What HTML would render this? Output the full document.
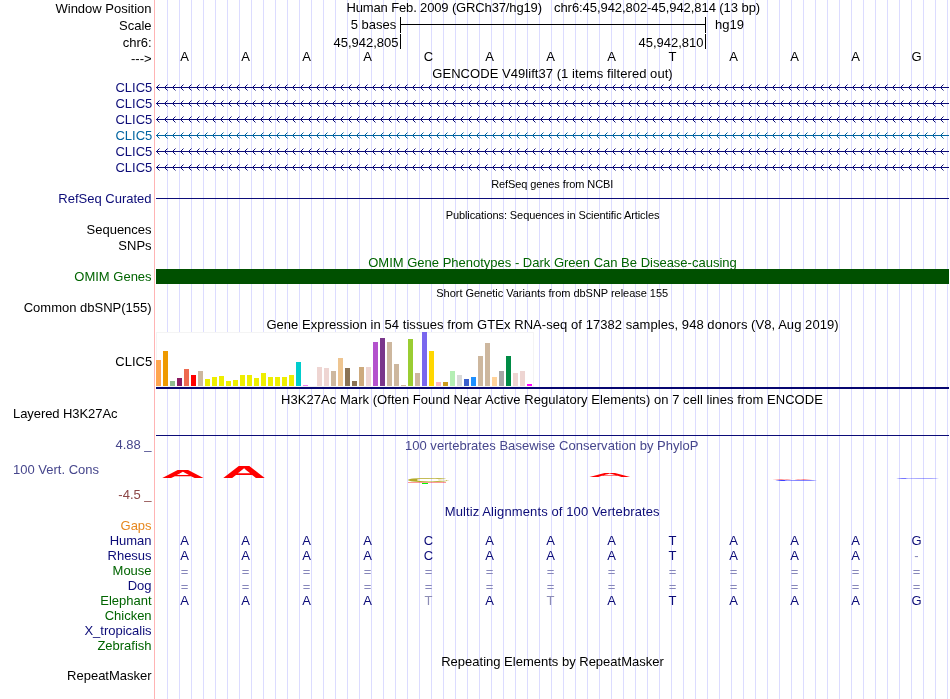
<!DOCTYPE html>
<html><head><meta charset="utf-8"><title>UCSC Genome Browser</title>
<style>
html,body{margin:0;padding:0;background:#fff;}
body{width:950px;height:699px;overflow:hidden;position:relative;font-family:"Liberation Sans",Arial,Helvetica,sans-serif;font-size:13px;color:#000;}
#v{position:absolute;left:0;top:0;width:950px;height:699px;overflow:hidden;will-change:transform;}
.g{position:absolute;top:0;width:1px;height:699px;background:#dcdcff;}
.t{position:absolute;white-space:pre;line-height:16px;height:16px;margin-top:1px;}
.r{text-align:right;left:0;width:151.6px;}
.c{text-align:center;left:155px;width:795px;}
.s{font-size:11px;margin-top:0;}
.b{position:absolute;}
.ln{position:absolute;left:156px;width:793px;height:1px;background:#0c0c78;}
.ch{position:absolute;left:156px;width:793px;height:7px;}
.bs{position:absolute;width:20px;text-align:center;line-height:16px;height:16px;margin-top:1px;}
svg{position:absolute;left:0;top:0;}
</style></head><body><div id="v">
<div class="g" style="left:167px"></div>
<div class="g" style="left:179px"></div>
<div class="g" style="left:191px"></div>
<div class="g" style="left:203px"></div>
<div class="g" style="left:215px"></div>
<div class="g" style="left:227px"></div>
<div class="g" style="left:239px"></div>
<div class="g" style="left:251px"></div>
<div class="g" style="left:263px"></div>
<div class="g" style="left:275px"></div>
<div class="g" style="left:287px"></div>
<div class="g" style="left:299px"></div>
<div class="g" style="left:311px"></div>
<div class="g" style="left:323px"></div>
<div class="g" style="left:335px"></div>
<div class="g" style="left:347px"></div>
<div class="g" style="left:359px"></div>
<div class="g" style="left:371px"></div>
<div class="g" style="left:383px"></div>
<div class="g" style="left:395px"></div>
<div class="g" style="left:407px"></div>
<div class="g" style="left:419px"></div>
<div class="g" style="left:431px"></div>
<div class="g" style="left:443px"></div>
<div class="g" style="left:455px"></div>
<div class="g" style="left:467px"></div>
<div class="g" style="left:479px"></div>
<div class="g" style="left:491px"></div>
<div class="g" style="left:503px"></div>
<div class="g" style="left:515px"></div>
<div class="g" style="left:527px"></div>
<div class="g" style="left:539px"></div>
<div class="g" style="left:551px"></div>
<div class="g" style="left:563px"></div>
<div class="g" style="left:575px"></div>
<div class="g" style="left:587px"></div>
<div class="g" style="left:599px"></div>
<div class="g" style="left:611px"></div>
<div class="g" style="left:623px"></div>
<div class="g" style="left:635px"></div>
<div class="g" style="left:647px"></div>
<div class="g" style="left:659px"></div>
<div class="g" style="left:671px"></div>
<div class="g" style="left:683px"></div>
<div class="g" style="left:695px"></div>
<div class="g" style="left:707px"></div>
<div class="g" style="left:719px"></div>
<div class="g" style="left:731px"></div>
<div class="g" style="left:743px"></div>
<div class="g" style="left:755px"></div>
<div class="g" style="left:767px"></div>
<div class="g" style="left:779px"></div>
<div class="g" style="left:791px"></div>
<div class="g" style="left:803px"></div>
<div class="g" style="left:815px"></div>
<div class="g" style="left:827px"></div>
<div class="g" style="left:839px"></div>
<div class="g" style="left:851px"></div>
<div class="g" style="left:863px"></div>
<div class="g" style="left:875px"></div>
<div class="g" style="left:887px"></div>
<div class="g" style="left:899px"></div>
<div class="g" style="left:911px"></div>
<div class="g" style="left:923px"></div>
<div class="g" style="left:935px"></div>
<div class="g" style="left:947px"></div>
<div class="g" style="left:154px;background:#ffb4b4"></div>
<div class="t r" style="top:0px;color:#000;">Window Position</div>
<div class="t r" style="top:17px;color:#000;">Scale</div>
<div class="t r" style="top:34px;color:#000;">chr6:</div>
<div class="t r" style="top:50px;color:#000;">---&gt;</div>
<div class="t" style="left:346.5px;top:-1px;letter-spacing:-0.14px">Human Feb. 2009 (GRCh37/hg19)</div>
<div class="t" style="left:554px;top:-1px;letter-spacing:-0.06px">chr6:45,942,802-45,942,814 (13 bp)</div>
<div class="t" style="left:300px;width:96.3px;text-align:right;top:16px">5 bases</div>
<div class="b" style="left:400px;top:24px;width:306px;height:1px;background:#000"></div>
<div class="b" style="left:400px;top:17px;width:1px;height:16px;background:#000"></div>
<div class="b" style="left:705px;top:17px;width:1px;height:16px;background:#000"></div>
<div class="t" style="left:715px;top:16px">hg19</div>
<div class="t" style="left:300px;width:98.5px;text-align:right;top:34px">45,942,805</div>
<div class="b" style="left:400px;top:34px;width:1px;height:15px;background:#000"></div>
<div class="t" style="left:600px;width:103.5px;text-align:right;top:34px">45,942,810</div>
<div class="b" style="left:705px;top:34px;width:1px;height:15px;background:#000"></div>
<div class="bs" style="left:174.5px;top:48px">A</div>
<div class="bs" style="left:235.5px;top:48px">A</div>
<div class="bs" style="left:296.5px;top:48px">A</div>
<div class="bs" style="left:357.5px;top:48px">A</div>
<div class="bs" style="left:418.5px;top:48px">C</div>
<div class="bs" style="left:479.5px;top:48px">A</div>
<div class="bs" style="left:540.5px;top:48px">A</div>
<div class="bs" style="left:601.5px;top:48px">A</div>
<div class="bs" style="left:662.5px;top:48px">T</div>
<div class="bs" style="left:723.5px;top:48px">A</div>
<div class="bs" style="left:784.5px;top:48px">A</div>
<div class="bs" style="left:845.5px;top:48px">A</div>
<div class="bs" style="left:906.5px;top:48px">G</div>
<div class="t c" style="top:65px;color:#000;letter-spacing:0.05px">GENCODE V49lift37 (1 items filtered out)</div>
<div class="t r" style="top:79px;color:#0c0c78;width:152.3px">CLIC5</div>
<div class="ln" style="top:87px;background:#0c0c78"></div>
<svg class="ch" style="left:156px;top:84px" width="793" height="7" viewBox="0 0 793 7"><path d="M3.5 0.5L0.5 3.5L3.5 6.5M11.5 0.5L8.5 3.5L11.5 6.5M19.5 0.5L16.5 3.5L19.5 6.5M27.5 0.5L24.5 3.5L27.5 6.5M35.5 0.5L32.5 3.5L35.5 6.5M43.5 0.5L40.5 3.5L43.5 6.5M51.5 0.5L48.5 3.5L51.5 6.5M59.5 0.5L56.5 3.5L59.5 6.5M67.5 0.5L64.5 3.5L67.5 6.5M75.5 0.5L72.5 3.5L75.5 6.5M83.5 0.5L80.5 3.5L83.5 6.5M91.5 0.5L88.5 3.5L91.5 6.5M99.5 0.5L96.5 3.5L99.5 6.5M107.5 0.5L104.5 3.5L107.5 6.5M115.5 0.5L112.5 3.5L115.5 6.5M123.5 0.5L120.5 3.5L123.5 6.5M131.5 0.5L128.5 3.5L131.5 6.5M139.5 0.5L136.5 3.5L139.5 6.5M147.5 0.5L144.5 3.5L147.5 6.5M155.5 0.5L152.5 3.5L155.5 6.5M163.5 0.5L160.5 3.5L163.5 6.5M171.5 0.5L168.5 3.5L171.5 6.5M179.5 0.5L176.5 3.5L179.5 6.5M187.5 0.5L184.5 3.5L187.5 6.5M195.5 0.5L192.5 3.5L195.5 6.5M203.5 0.5L200.5 3.5L203.5 6.5M211.5 0.5L208.5 3.5L211.5 6.5M219.5 0.5L216.5 3.5L219.5 6.5M227.5 0.5L224.5 3.5L227.5 6.5M235.5 0.5L232.5 3.5L235.5 6.5M243.5 0.5L240.5 3.5L243.5 6.5M251.5 0.5L248.5 3.5L251.5 6.5M259.5 0.5L256.5 3.5L259.5 6.5M267.5 0.5L264.5 3.5L267.5 6.5M275.5 0.5L272.5 3.5L275.5 6.5M283.5 0.5L280.5 3.5L283.5 6.5M291.5 0.5L288.5 3.5L291.5 6.5M299.5 0.5L296.5 3.5L299.5 6.5M307.5 0.5L304.5 3.5L307.5 6.5M315.5 0.5L312.5 3.5L315.5 6.5M323.5 0.5L320.5 3.5L323.5 6.5M331.5 0.5L328.5 3.5L331.5 6.5M339.5 0.5L336.5 3.5L339.5 6.5M347.5 0.5L344.5 3.5L347.5 6.5M355.5 0.5L352.5 3.5L355.5 6.5M363.5 0.5L360.5 3.5L363.5 6.5M371.5 0.5L368.5 3.5L371.5 6.5M379.5 0.5L376.5 3.5L379.5 6.5M387.5 0.5L384.5 3.5L387.5 6.5M395.5 0.5L392.5 3.5L395.5 6.5M403.5 0.5L400.5 3.5L403.5 6.5M411.5 0.5L408.5 3.5L411.5 6.5M419.5 0.5L416.5 3.5L419.5 6.5M427.5 0.5L424.5 3.5L427.5 6.5M435.5 0.5L432.5 3.5L435.5 6.5M443.5 0.5L440.5 3.5L443.5 6.5M451.5 0.5L448.5 3.5L451.5 6.5M459.5 0.5L456.5 3.5L459.5 6.5M467.5 0.5L464.5 3.5L467.5 6.5M475.5 0.5L472.5 3.5L475.5 6.5M483.5 0.5L480.5 3.5L483.5 6.5M491.5 0.5L488.5 3.5L491.5 6.5M499.5 0.5L496.5 3.5L499.5 6.5M507.5 0.5L504.5 3.5L507.5 6.5M515.5 0.5L512.5 3.5L515.5 6.5M523.5 0.5L520.5 3.5L523.5 6.5M531.5 0.5L528.5 3.5L531.5 6.5M539.5 0.5L536.5 3.5L539.5 6.5M547.5 0.5L544.5 3.5L547.5 6.5M555.5 0.5L552.5 3.5L555.5 6.5M563.5 0.5L560.5 3.5L563.5 6.5M571.5 0.5L568.5 3.5L571.5 6.5M579.5 0.5L576.5 3.5L579.5 6.5M587.5 0.5L584.5 3.5L587.5 6.5M595.5 0.5L592.5 3.5L595.5 6.5M603.5 0.5L600.5 3.5L603.5 6.5M611.5 0.5L608.5 3.5L611.5 6.5M619.5 0.5L616.5 3.5L619.5 6.5M627.5 0.5L624.5 3.5L627.5 6.5M635.5 0.5L632.5 3.5L635.5 6.5M643.5 0.5L640.5 3.5L643.5 6.5M651.5 0.5L648.5 3.5L651.5 6.5M659.5 0.5L656.5 3.5L659.5 6.5M667.5 0.5L664.5 3.5L667.5 6.5M675.5 0.5L672.5 3.5L675.5 6.5M683.5 0.5L680.5 3.5L683.5 6.5M691.5 0.5L688.5 3.5L691.5 6.5M699.5 0.5L696.5 3.5L699.5 6.5M707.5 0.5L704.5 3.5L707.5 6.5M715.5 0.5L712.5 3.5L715.5 6.5M723.5 0.5L720.5 3.5L723.5 6.5M731.5 0.5L728.5 3.5L731.5 6.5M739.5 0.5L736.5 3.5L739.5 6.5M747.5 0.5L744.5 3.5L747.5 6.5M755.5 0.5L752.5 3.5L755.5 6.5M763.5 0.5L760.5 3.5L763.5 6.5M771.5 0.5L768.5 3.5L771.5 6.5M779.5 0.5L776.5 3.5L779.5 6.5M787.5 0.5L784.5 3.5L787.5 6.5" fill="none" stroke="#0c0c78" stroke-width="1"/></svg>
<div class="t r" style="top:95px;color:#0c0c78;width:152.3px">CLIC5</div>
<div class="ln" style="top:103px;background:#0c0c78"></div>
<svg class="ch" style="left:156px;top:100px" width="793" height="7" viewBox="0 0 793 7"><path d="M3.5 0.5L0.5 3.5L3.5 6.5M11.5 0.5L8.5 3.5L11.5 6.5M19.5 0.5L16.5 3.5L19.5 6.5M27.5 0.5L24.5 3.5L27.5 6.5M35.5 0.5L32.5 3.5L35.5 6.5M43.5 0.5L40.5 3.5L43.5 6.5M51.5 0.5L48.5 3.5L51.5 6.5M59.5 0.5L56.5 3.5L59.5 6.5M67.5 0.5L64.5 3.5L67.5 6.5M75.5 0.5L72.5 3.5L75.5 6.5M83.5 0.5L80.5 3.5L83.5 6.5M91.5 0.5L88.5 3.5L91.5 6.5M99.5 0.5L96.5 3.5L99.5 6.5M107.5 0.5L104.5 3.5L107.5 6.5M115.5 0.5L112.5 3.5L115.5 6.5M123.5 0.5L120.5 3.5L123.5 6.5M131.5 0.5L128.5 3.5L131.5 6.5M139.5 0.5L136.5 3.5L139.5 6.5M147.5 0.5L144.5 3.5L147.5 6.5M155.5 0.5L152.5 3.5L155.5 6.5M163.5 0.5L160.5 3.5L163.5 6.5M171.5 0.5L168.5 3.5L171.5 6.5M179.5 0.5L176.5 3.5L179.5 6.5M187.5 0.5L184.5 3.5L187.5 6.5M195.5 0.5L192.5 3.5L195.5 6.5M203.5 0.5L200.5 3.5L203.5 6.5M211.5 0.5L208.5 3.5L211.5 6.5M219.5 0.5L216.5 3.5L219.5 6.5M227.5 0.5L224.5 3.5L227.5 6.5M235.5 0.5L232.5 3.5L235.5 6.5M243.5 0.5L240.5 3.5L243.5 6.5M251.5 0.5L248.5 3.5L251.5 6.5M259.5 0.5L256.5 3.5L259.5 6.5M267.5 0.5L264.5 3.5L267.5 6.5M275.5 0.5L272.5 3.5L275.5 6.5M283.5 0.5L280.5 3.5L283.5 6.5M291.5 0.5L288.5 3.5L291.5 6.5M299.5 0.5L296.5 3.5L299.5 6.5M307.5 0.5L304.5 3.5L307.5 6.5M315.5 0.5L312.5 3.5L315.5 6.5M323.5 0.5L320.5 3.5L323.5 6.5M331.5 0.5L328.5 3.5L331.5 6.5M339.5 0.5L336.5 3.5L339.5 6.5M347.5 0.5L344.5 3.5L347.5 6.5M355.5 0.5L352.5 3.5L355.5 6.5M363.5 0.5L360.5 3.5L363.5 6.5M371.5 0.5L368.5 3.5L371.5 6.5M379.5 0.5L376.5 3.5L379.5 6.5M387.5 0.5L384.5 3.5L387.5 6.5M395.5 0.5L392.5 3.5L395.5 6.5M403.5 0.5L400.5 3.5L403.5 6.5M411.5 0.5L408.5 3.5L411.5 6.5M419.5 0.5L416.5 3.5L419.5 6.5M427.5 0.5L424.5 3.5L427.5 6.5M435.5 0.5L432.5 3.5L435.5 6.5M443.5 0.5L440.5 3.5L443.5 6.5M451.5 0.5L448.5 3.5L451.5 6.5M459.5 0.5L456.5 3.5L459.5 6.5M467.5 0.5L464.5 3.5L467.5 6.5M475.5 0.5L472.5 3.5L475.5 6.5M483.5 0.5L480.5 3.5L483.5 6.5M491.5 0.5L488.5 3.5L491.5 6.5M499.5 0.5L496.5 3.5L499.5 6.5M507.5 0.5L504.5 3.5L507.5 6.5M515.5 0.5L512.5 3.5L515.5 6.5M523.5 0.5L520.5 3.5L523.5 6.5M531.5 0.5L528.5 3.5L531.5 6.5M539.5 0.5L536.5 3.5L539.5 6.5M547.5 0.5L544.5 3.5L547.5 6.5M555.5 0.5L552.5 3.5L555.5 6.5M563.5 0.5L560.5 3.5L563.5 6.5M571.5 0.5L568.5 3.5L571.5 6.5M579.5 0.5L576.5 3.5L579.5 6.5M587.5 0.5L584.5 3.5L587.5 6.5M595.5 0.5L592.5 3.5L595.5 6.5M603.5 0.5L600.5 3.5L603.5 6.5M611.5 0.5L608.5 3.5L611.5 6.5M619.5 0.5L616.5 3.5L619.5 6.5M627.5 0.5L624.5 3.5L627.5 6.5M635.5 0.5L632.5 3.5L635.5 6.5M643.5 0.5L640.5 3.5L643.5 6.5M651.5 0.5L648.5 3.5L651.5 6.5M659.5 0.5L656.5 3.5L659.5 6.5M667.5 0.5L664.5 3.5L667.5 6.5M675.5 0.5L672.5 3.5L675.5 6.5M683.5 0.5L680.5 3.5L683.5 6.5M691.5 0.5L688.5 3.5L691.5 6.5M699.5 0.5L696.5 3.5L699.5 6.5M707.5 0.5L704.5 3.5L707.5 6.5M715.5 0.5L712.5 3.5L715.5 6.5M723.5 0.5L720.5 3.5L723.5 6.5M731.5 0.5L728.5 3.5L731.5 6.5M739.5 0.5L736.5 3.5L739.5 6.5M747.5 0.5L744.5 3.5L747.5 6.5M755.5 0.5L752.5 3.5L755.5 6.5M763.5 0.5L760.5 3.5L763.5 6.5M771.5 0.5L768.5 3.5L771.5 6.5M779.5 0.5L776.5 3.5L779.5 6.5M787.5 0.5L784.5 3.5L787.5 6.5" fill="none" stroke="#0c0c78" stroke-width="1"/></svg>
<div class="t r" style="top:111px;color:#0c0c78;width:152.3px">CLIC5</div>
<div class="ln" style="top:119px;background:#0c0c78"></div>
<svg class="ch" style="left:156px;top:116px" width="793" height="7" viewBox="0 0 793 7"><path d="M3.5 0.5L0.5 3.5L3.5 6.5M11.5 0.5L8.5 3.5L11.5 6.5M19.5 0.5L16.5 3.5L19.5 6.5M27.5 0.5L24.5 3.5L27.5 6.5M35.5 0.5L32.5 3.5L35.5 6.5M43.5 0.5L40.5 3.5L43.5 6.5M51.5 0.5L48.5 3.5L51.5 6.5M59.5 0.5L56.5 3.5L59.5 6.5M67.5 0.5L64.5 3.5L67.5 6.5M75.5 0.5L72.5 3.5L75.5 6.5M83.5 0.5L80.5 3.5L83.5 6.5M91.5 0.5L88.5 3.5L91.5 6.5M99.5 0.5L96.5 3.5L99.5 6.5M107.5 0.5L104.5 3.5L107.5 6.5M115.5 0.5L112.5 3.5L115.5 6.5M123.5 0.5L120.5 3.5L123.5 6.5M131.5 0.5L128.5 3.5L131.5 6.5M139.5 0.5L136.5 3.5L139.5 6.5M147.5 0.5L144.5 3.5L147.5 6.5M155.5 0.5L152.5 3.5L155.5 6.5M163.5 0.5L160.5 3.5L163.5 6.5M171.5 0.5L168.5 3.5L171.5 6.5M179.5 0.5L176.5 3.5L179.5 6.5M187.5 0.5L184.5 3.5L187.5 6.5M195.5 0.5L192.5 3.5L195.5 6.5M203.5 0.5L200.5 3.5L203.5 6.5M211.5 0.5L208.5 3.5L211.5 6.5M219.5 0.5L216.5 3.5L219.5 6.5M227.5 0.5L224.5 3.5L227.5 6.5M235.5 0.5L232.5 3.5L235.5 6.5M243.5 0.5L240.5 3.5L243.5 6.5M251.5 0.5L248.5 3.5L251.5 6.5M259.5 0.5L256.5 3.5L259.5 6.5M267.5 0.5L264.5 3.5L267.5 6.5M275.5 0.5L272.5 3.5L275.5 6.5M283.5 0.5L280.5 3.5L283.5 6.5M291.5 0.5L288.5 3.5L291.5 6.5M299.5 0.5L296.5 3.5L299.5 6.5M307.5 0.5L304.5 3.5L307.5 6.5M315.5 0.5L312.5 3.5L315.5 6.5M323.5 0.5L320.5 3.5L323.5 6.5M331.5 0.5L328.5 3.5L331.5 6.5M339.5 0.5L336.5 3.5L339.5 6.5M347.5 0.5L344.5 3.5L347.5 6.5M355.5 0.5L352.5 3.5L355.5 6.5M363.5 0.5L360.5 3.5L363.5 6.5M371.5 0.5L368.5 3.5L371.5 6.5M379.5 0.5L376.5 3.5L379.5 6.5M387.5 0.5L384.5 3.5L387.5 6.5M395.5 0.5L392.5 3.5L395.5 6.5M403.5 0.5L400.5 3.5L403.5 6.5M411.5 0.5L408.5 3.5L411.5 6.5M419.5 0.5L416.5 3.5L419.5 6.5M427.5 0.5L424.5 3.5L427.5 6.5M435.5 0.5L432.5 3.5L435.5 6.5M443.5 0.5L440.5 3.5L443.5 6.5M451.5 0.5L448.5 3.5L451.5 6.5M459.5 0.5L456.5 3.5L459.5 6.5M467.5 0.5L464.5 3.5L467.5 6.5M475.5 0.5L472.5 3.5L475.5 6.5M483.5 0.5L480.5 3.5L483.5 6.5M491.5 0.5L488.5 3.5L491.5 6.5M499.5 0.5L496.5 3.5L499.5 6.5M507.5 0.5L504.5 3.5L507.5 6.5M515.5 0.5L512.5 3.5L515.5 6.5M523.5 0.5L520.5 3.5L523.5 6.5M531.5 0.5L528.5 3.5L531.5 6.5M539.5 0.5L536.5 3.5L539.5 6.5M547.5 0.5L544.5 3.5L547.5 6.5M555.5 0.5L552.5 3.5L555.5 6.5M563.5 0.5L560.5 3.5L563.5 6.5M571.5 0.5L568.5 3.5L571.5 6.5M579.5 0.5L576.5 3.5L579.5 6.5M587.5 0.5L584.5 3.5L587.5 6.5M595.5 0.5L592.5 3.5L595.5 6.5M603.5 0.5L600.5 3.5L603.5 6.5M611.5 0.5L608.5 3.5L611.5 6.5M619.5 0.5L616.5 3.5L619.5 6.5M627.5 0.5L624.5 3.5L627.5 6.5M635.5 0.5L632.5 3.5L635.5 6.5M643.5 0.5L640.5 3.5L643.5 6.5M651.5 0.5L648.5 3.5L651.5 6.5M659.5 0.5L656.5 3.5L659.5 6.5M667.5 0.5L664.5 3.5L667.5 6.5M675.5 0.5L672.5 3.5L675.5 6.5M683.5 0.5L680.5 3.5L683.5 6.5M691.5 0.5L688.5 3.5L691.5 6.5M699.5 0.5L696.5 3.5L699.5 6.5M707.5 0.5L704.5 3.5L707.5 6.5M715.5 0.5L712.5 3.5L715.5 6.5M723.5 0.5L720.5 3.5L723.5 6.5M731.5 0.5L728.5 3.5L731.5 6.5M739.5 0.5L736.5 3.5L739.5 6.5M747.5 0.5L744.5 3.5L747.5 6.5M755.5 0.5L752.5 3.5L755.5 6.5M763.5 0.5L760.5 3.5L763.5 6.5M771.5 0.5L768.5 3.5L771.5 6.5M779.5 0.5L776.5 3.5L779.5 6.5M787.5 0.5L784.5 3.5L787.5 6.5" fill="none" stroke="#0c0c78" stroke-width="1"/></svg>
<div class="t r" style="top:127px;color:#0064a0;width:152.3px">CLIC5</div>
<div class="ln" style="top:135px;background:#0064a0"></div>
<svg class="ch" style="left:156px;top:132px" width="793" height="7" viewBox="0 0 793 7"><path d="M3.5 0.5L0.5 3.5L3.5 6.5M11.5 0.5L8.5 3.5L11.5 6.5M19.5 0.5L16.5 3.5L19.5 6.5M27.5 0.5L24.5 3.5L27.5 6.5M35.5 0.5L32.5 3.5L35.5 6.5M43.5 0.5L40.5 3.5L43.5 6.5M51.5 0.5L48.5 3.5L51.5 6.5M59.5 0.5L56.5 3.5L59.5 6.5M67.5 0.5L64.5 3.5L67.5 6.5M75.5 0.5L72.5 3.5L75.5 6.5M83.5 0.5L80.5 3.5L83.5 6.5M91.5 0.5L88.5 3.5L91.5 6.5M99.5 0.5L96.5 3.5L99.5 6.5M107.5 0.5L104.5 3.5L107.5 6.5M115.5 0.5L112.5 3.5L115.5 6.5M123.5 0.5L120.5 3.5L123.5 6.5M131.5 0.5L128.5 3.5L131.5 6.5M139.5 0.5L136.5 3.5L139.5 6.5M147.5 0.5L144.5 3.5L147.5 6.5M155.5 0.5L152.5 3.5L155.5 6.5M163.5 0.5L160.5 3.5L163.5 6.5M171.5 0.5L168.5 3.5L171.5 6.5M179.5 0.5L176.5 3.5L179.5 6.5M187.5 0.5L184.5 3.5L187.5 6.5M195.5 0.5L192.5 3.5L195.5 6.5M203.5 0.5L200.5 3.5L203.5 6.5M211.5 0.5L208.5 3.5L211.5 6.5M219.5 0.5L216.5 3.5L219.5 6.5M227.5 0.5L224.5 3.5L227.5 6.5M235.5 0.5L232.5 3.5L235.5 6.5M243.5 0.5L240.5 3.5L243.5 6.5M251.5 0.5L248.5 3.5L251.5 6.5M259.5 0.5L256.5 3.5L259.5 6.5M267.5 0.5L264.5 3.5L267.5 6.5M275.5 0.5L272.5 3.5L275.5 6.5M283.5 0.5L280.5 3.5L283.5 6.5M291.5 0.5L288.5 3.5L291.5 6.5M299.5 0.5L296.5 3.5L299.5 6.5M307.5 0.5L304.5 3.5L307.5 6.5M315.5 0.5L312.5 3.5L315.5 6.5M323.5 0.5L320.5 3.5L323.5 6.5M331.5 0.5L328.5 3.5L331.5 6.5M339.5 0.5L336.5 3.5L339.5 6.5M347.5 0.5L344.5 3.5L347.5 6.5M355.5 0.5L352.5 3.5L355.5 6.5M363.5 0.5L360.5 3.5L363.5 6.5M371.5 0.5L368.5 3.5L371.5 6.5M379.5 0.5L376.5 3.5L379.5 6.5M387.5 0.5L384.5 3.5L387.5 6.5M395.5 0.5L392.5 3.5L395.5 6.5M403.5 0.5L400.5 3.5L403.5 6.5M411.5 0.5L408.5 3.5L411.5 6.5M419.5 0.5L416.5 3.5L419.5 6.5M427.5 0.5L424.5 3.5L427.5 6.5M435.5 0.5L432.5 3.5L435.5 6.5M443.5 0.5L440.5 3.5L443.5 6.5M451.5 0.5L448.5 3.5L451.5 6.5M459.5 0.5L456.5 3.5L459.5 6.5M467.5 0.5L464.5 3.5L467.5 6.5M475.5 0.5L472.5 3.5L475.5 6.5M483.5 0.5L480.5 3.5L483.5 6.5M491.5 0.5L488.5 3.5L491.5 6.5M499.5 0.5L496.5 3.5L499.5 6.5M507.5 0.5L504.5 3.5L507.5 6.5M515.5 0.5L512.5 3.5L515.5 6.5M523.5 0.5L520.5 3.5L523.5 6.5M531.5 0.5L528.5 3.5L531.5 6.5M539.5 0.5L536.5 3.5L539.5 6.5M547.5 0.5L544.5 3.5L547.5 6.5M555.5 0.5L552.5 3.5L555.5 6.5M563.5 0.5L560.5 3.5L563.5 6.5M571.5 0.5L568.5 3.5L571.5 6.5M579.5 0.5L576.5 3.5L579.5 6.5M587.5 0.5L584.5 3.5L587.5 6.5M595.5 0.5L592.5 3.5L595.5 6.5M603.5 0.5L600.5 3.5L603.5 6.5M611.5 0.5L608.5 3.5L611.5 6.5M619.5 0.5L616.5 3.5L619.5 6.5M627.5 0.5L624.5 3.5L627.5 6.5M635.5 0.5L632.5 3.5L635.5 6.5M643.5 0.5L640.5 3.5L643.5 6.5M651.5 0.5L648.5 3.5L651.5 6.5M659.5 0.5L656.5 3.5L659.5 6.5M667.5 0.5L664.5 3.5L667.5 6.5M675.5 0.5L672.5 3.5L675.5 6.5M683.5 0.5L680.5 3.5L683.5 6.5M691.5 0.5L688.5 3.5L691.5 6.5M699.5 0.5L696.5 3.5L699.5 6.5M707.5 0.5L704.5 3.5L707.5 6.5M715.5 0.5L712.5 3.5L715.5 6.5M723.5 0.5L720.5 3.5L723.5 6.5M731.5 0.5L728.5 3.5L731.5 6.5M739.5 0.5L736.5 3.5L739.5 6.5M747.5 0.5L744.5 3.5L747.5 6.5M755.5 0.5L752.5 3.5L755.5 6.5M763.5 0.5L760.5 3.5L763.5 6.5M771.5 0.5L768.5 3.5L771.5 6.5M779.5 0.5L776.5 3.5L779.5 6.5M787.5 0.5L784.5 3.5L787.5 6.5" fill="none" stroke="#0064a0" stroke-width="1"/></svg>
<div class="t r" style="top:143px;color:#0c0c78;width:152.3px">CLIC5</div>
<div class="ln" style="top:151px;background:#0c0c78"></div>
<svg class="ch" style="left:156px;top:148px" width="793" height="7" viewBox="0 0 793 7"><path d="M3.5 0.5L0.5 3.5L3.5 6.5M11.5 0.5L8.5 3.5L11.5 6.5M19.5 0.5L16.5 3.5L19.5 6.5M27.5 0.5L24.5 3.5L27.5 6.5M35.5 0.5L32.5 3.5L35.5 6.5M43.5 0.5L40.5 3.5L43.5 6.5M51.5 0.5L48.5 3.5L51.5 6.5M59.5 0.5L56.5 3.5L59.5 6.5M67.5 0.5L64.5 3.5L67.5 6.5M75.5 0.5L72.5 3.5L75.5 6.5M83.5 0.5L80.5 3.5L83.5 6.5M91.5 0.5L88.5 3.5L91.5 6.5M99.5 0.5L96.5 3.5L99.5 6.5M107.5 0.5L104.5 3.5L107.5 6.5M115.5 0.5L112.5 3.5L115.5 6.5M123.5 0.5L120.5 3.5L123.5 6.5M131.5 0.5L128.5 3.5L131.5 6.5M139.5 0.5L136.5 3.5L139.5 6.5M147.5 0.5L144.5 3.5L147.5 6.5M155.5 0.5L152.5 3.5L155.5 6.5M163.5 0.5L160.5 3.5L163.5 6.5M171.5 0.5L168.5 3.5L171.5 6.5M179.5 0.5L176.5 3.5L179.5 6.5M187.5 0.5L184.5 3.5L187.5 6.5M195.5 0.5L192.5 3.5L195.5 6.5M203.5 0.5L200.5 3.5L203.5 6.5M211.5 0.5L208.5 3.5L211.5 6.5M219.5 0.5L216.5 3.5L219.5 6.5M227.5 0.5L224.5 3.5L227.5 6.5M235.5 0.5L232.5 3.5L235.5 6.5M243.5 0.5L240.5 3.5L243.5 6.5M251.5 0.5L248.5 3.5L251.5 6.5M259.5 0.5L256.5 3.5L259.5 6.5M267.5 0.5L264.5 3.5L267.5 6.5M275.5 0.5L272.5 3.5L275.5 6.5M283.5 0.5L280.5 3.5L283.5 6.5M291.5 0.5L288.5 3.5L291.5 6.5M299.5 0.5L296.5 3.5L299.5 6.5M307.5 0.5L304.5 3.5L307.5 6.5M315.5 0.5L312.5 3.5L315.5 6.5M323.5 0.5L320.5 3.5L323.5 6.5M331.5 0.5L328.5 3.5L331.5 6.5M339.5 0.5L336.5 3.5L339.5 6.5M347.5 0.5L344.5 3.5L347.5 6.5M355.5 0.5L352.5 3.5L355.5 6.5M363.5 0.5L360.5 3.5L363.5 6.5M371.5 0.5L368.5 3.5L371.5 6.5M379.5 0.5L376.5 3.5L379.5 6.5M387.5 0.5L384.5 3.5L387.5 6.5M395.5 0.5L392.5 3.5L395.5 6.5M403.5 0.5L400.5 3.5L403.5 6.5M411.5 0.5L408.5 3.5L411.5 6.5M419.5 0.5L416.5 3.5L419.5 6.5M427.5 0.5L424.5 3.5L427.5 6.5M435.5 0.5L432.5 3.5L435.5 6.5M443.5 0.5L440.5 3.5L443.5 6.5M451.5 0.5L448.5 3.5L451.5 6.5M459.5 0.5L456.5 3.5L459.5 6.5M467.5 0.5L464.5 3.5L467.5 6.5M475.5 0.5L472.5 3.5L475.5 6.5M483.5 0.5L480.5 3.5L483.5 6.5M491.5 0.5L488.5 3.5L491.5 6.5M499.5 0.5L496.5 3.5L499.5 6.5M507.5 0.5L504.5 3.5L507.5 6.5M515.5 0.5L512.5 3.5L515.5 6.5M523.5 0.5L520.5 3.5L523.5 6.5M531.5 0.5L528.5 3.5L531.5 6.5M539.5 0.5L536.5 3.5L539.5 6.5M547.5 0.5L544.5 3.5L547.5 6.5M555.5 0.5L552.5 3.5L555.5 6.5M563.5 0.5L560.5 3.5L563.5 6.5M571.5 0.5L568.5 3.5L571.5 6.5M579.5 0.5L576.5 3.5L579.5 6.5M587.5 0.5L584.5 3.5L587.5 6.5M595.5 0.5L592.5 3.5L595.5 6.5M603.5 0.5L600.5 3.5L603.5 6.5M611.5 0.5L608.5 3.5L611.5 6.5M619.5 0.5L616.5 3.5L619.5 6.5M627.5 0.5L624.5 3.5L627.5 6.5M635.5 0.5L632.5 3.5L635.5 6.5M643.5 0.5L640.5 3.5L643.5 6.5M651.5 0.5L648.5 3.5L651.5 6.5M659.5 0.5L656.5 3.5L659.5 6.5M667.5 0.5L664.5 3.5L667.5 6.5M675.5 0.5L672.5 3.5L675.5 6.5M683.5 0.5L680.5 3.5L683.5 6.5M691.5 0.5L688.5 3.5L691.5 6.5M699.5 0.5L696.5 3.5L699.5 6.5M707.5 0.5L704.5 3.5L707.5 6.5M715.5 0.5L712.5 3.5L715.5 6.5M723.5 0.5L720.5 3.5L723.5 6.5M731.5 0.5L728.5 3.5L731.5 6.5M739.5 0.5L736.5 3.5L739.5 6.5M747.5 0.5L744.5 3.5L747.5 6.5M755.5 0.5L752.5 3.5L755.5 6.5M763.5 0.5L760.5 3.5L763.5 6.5M771.5 0.5L768.5 3.5L771.5 6.5M779.5 0.5L776.5 3.5L779.5 6.5M787.5 0.5L784.5 3.5L787.5 6.5" fill="none" stroke="#0c0c78" stroke-width="1"/></svg>
<div class="t r" style="top:159px;color:#0c0c78;width:152.3px">CLIC5</div>
<div class="ln" style="top:167px;background:#0c0c78"></div>
<svg class="ch" style="left:156px;top:164px" width="793" height="7" viewBox="0 0 793 7"><path d="M3.5 0.5L0.5 3.5L3.5 6.5M11.5 0.5L8.5 3.5L11.5 6.5M19.5 0.5L16.5 3.5L19.5 6.5M27.5 0.5L24.5 3.5L27.5 6.5M35.5 0.5L32.5 3.5L35.5 6.5M43.5 0.5L40.5 3.5L43.5 6.5M51.5 0.5L48.5 3.5L51.5 6.5M59.5 0.5L56.5 3.5L59.5 6.5M67.5 0.5L64.5 3.5L67.5 6.5M75.5 0.5L72.5 3.5L75.5 6.5M83.5 0.5L80.5 3.5L83.5 6.5M91.5 0.5L88.5 3.5L91.5 6.5M99.5 0.5L96.5 3.5L99.5 6.5M107.5 0.5L104.5 3.5L107.5 6.5M115.5 0.5L112.5 3.5L115.5 6.5M123.5 0.5L120.5 3.5L123.5 6.5M131.5 0.5L128.5 3.5L131.5 6.5M139.5 0.5L136.5 3.5L139.5 6.5M147.5 0.5L144.5 3.5L147.5 6.5M155.5 0.5L152.5 3.5L155.5 6.5M163.5 0.5L160.5 3.5L163.5 6.5M171.5 0.5L168.5 3.5L171.5 6.5M179.5 0.5L176.5 3.5L179.5 6.5M187.5 0.5L184.5 3.5L187.5 6.5M195.5 0.5L192.5 3.5L195.5 6.5M203.5 0.5L200.5 3.5L203.5 6.5M211.5 0.5L208.5 3.5L211.5 6.5M219.5 0.5L216.5 3.5L219.5 6.5M227.5 0.5L224.5 3.5L227.5 6.5M235.5 0.5L232.5 3.5L235.5 6.5M243.5 0.5L240.5 3.5L243.5 6.5M251.5 0.5L248.5 3.5L251.5 6.5M259.5 0.5L256.5 3.5L259.5 6.5M267.5 0.5L264.5 3.5L267.5 6.5M275.5 0.5L272.5 3.5L275.5 6.5M283.5 0.5L280.5 3.5L283.5 6.5M291.5 0.5L288.5 3.5L291.5 6.5M299.5 0.5L296.5 3.5L299.5 6.5M307.5 0.5L304.5 3.5L307.5 6.5M315.5 0.5L312.5 3.5L315.5 6.5M323.5 0.5L320.5 3.5L323.5 6.5M331.5 0.5L328.5 3.5L331.5 6.5M339.5 0.5L336.5 3.5L339.5 6.5M347.5 0.5L344.5 3.5L347.5 6.5M355.5 0.5L352.5 3.5L355.5 6.5M363.5 0.5L360.5 3.5L363.5 6.5M371.5 0.5L368.5 3.5L371.5 6.5M379.5 0.5L376.5 3.5L379.5 6.5M387.5 0.5L384.5 3.5L387.5 6.5M395.5 0.5L392.5 3.5L395.5 6.5M403.5 0.5L400.5 3.5L403.5 6.5M411.5 0.5L408.5 3.5L411.5 6.5M419.5 0.5L416.5 3.5L419.5 6.5M427.5 0.5L424.5 3.5L427.5 6.5M435.5 0.5L432.5 3.5L435.5 6.5M443.5 0.5L440.5 3.5L443.5 6.5M451.5 0.5L448.5 3.5L451.5 6.5M459.5 0.5L456.5 3.5L459.5 6.5M467.5 0.5L464.5 3.5L467.5 6.5M475.5 0.5L472.5 3.5L475.5 6.5M483.5 0.5L480.5 3.5L483.5 6.5M491.5 0.5L488.5 3.5L491.5 6.5M499.5 0.5L496.5 3.5L499.5 6.5M507.5 0.5L504.5 3.5L507.5 6.5M515.5 0.5L512.5 3.5L515.5 6.5M523.5 0.5L520.5 3.5L523.5 6.5M531.5 0.5L528.5 3.5L531.5 6.5M539.5 0.5L536.5 3.5L539.5 6.5M547.5 0.5L544.5 3.5L547.5 6.5M555.5 0.5L552.5 3.5L555.5 6.5M563.5 0.5L560.5 3.5L563.5 6.5M571.5 0.5L568.5 3.5L571.5 6.5M579.5 0.5L576.5 3.5L579.5 6.5M587.5 0.5L584.5 3.5L587.5 6.5M595.5 0.5L592.5 3.5L595.5 6.5M603.5 0.5L600.5 3.5L603.5 6.5M611.5 0.5L608.5 3.5L611.5 6.5M619.5 0.5L616.5 3.5L619.5 6.5M627.5 0.5L624.5 3.5L627.5 6.5M635.5 0.5L632.5 3.5L635.5 6.5M643.5 0.5L640.5 3.5L643.5 6.5M651.5 0.5L648.5 3.5L651.5 6.5M659.5 0.5L656.5 3.5L659.5 6.5M667.5 0.5L664.5 3.5L667.5 6.5M675.5 0.5L672.5 3.5L675.5 6.5M683.5 0.5L680.5 3.5L683.5 6.5M691.5 0.5L688.5 3.5L691.5 6.5M699.5 0.5L696.5 3.5L699.5 6.5M707.5 0.5L704.5 3.5L707.5 6.5M715.5 0.5L712.5 3.5L715.5 6.5M723.5 0.5L720.5 3.5L723.5 6.5M731.5 0.5L728.5 3.5L731.5 6.5M739.5 0.5L736.5 3.5L739.5 6.5M747.5 0.5L744.5 3.5L747.5 6.5M755.5 0.5L752.5 3.5L755.5 6.5M763.5 0.5L760.5 3.5L763.5 6.5M771.5 0.5L768.5 3.5L771.5 6.5M779.5 0.5L776.5 3.5L779.5 6.5M787.5 0.5L784.5 3.5L787.5 6.5" fill="none" stroke="#0c0c78" stroke-width="1"/></svg>
<div class="t c s" style="top:176px;color:#000;letter-spacing:-0.09px;margin-left:-0.3px">RefSeq genes from NCBI</div>
<div class="t r" style="top:190px;color:#0c0c78;">RefSeq Curated</div>
<div class="ln" style="top:198px"></div>
<div class="t c s" style="top:207px;color:#000;letter-spacing:-0.087px">Publications: Sequences in Scientific Articles</div>
<div class="t r" style="top:221px;color:#000;">Sequences</div>
<div class="t r" style="top:237px;color:#000;">SNPs</div>
<div class="t c" style="top:254px;color:#006400;">OMIM Gene Phenotypes - Dark Green Can Be Disease-causing</div>
<div class="t r" style="top:268px;color:#006400;">OMIM Genes</div>
<div class="b" style="left:156px;top:269px;width:793px;height:15px;background:#005000"></div>
<div class="t c s" style="top:285px;color:#000;letter-spacing:-0.03px;margin-left:-0.3px">Short Genetic Variants from dbSNP release 155</div>
<div class="t r" style="top:299px;color:#000;">Common dbSNP(155)</div>
<div class="t c" style="top:316px;color:#000;letter-spacing:0.055px">Gene Expression in 54 tissues from GTEx RNA-seq of 17382 samples, 948 donors (V8, Aug 2019)</div>
<div class="b" style="left:156px;top:332px;width:378px;height:55px;background:#fff;box-shadow:inset 0 0 0 1px #f4f4f4"></div>
<div class="b" style="left:156px;top:360px;width:5px;height:26px;background:#FFA54F"></div>
<div class="b" style="left:163px;top:351px;width:5px;height:35px;background:#EE9A00"></div>
<div class="b" style="left:170px;top:381px;width:5px;height:5px;background:#8FBC8F"></div>
<div class="b" style="left:177px;top:378px;width:5px;height:8px;background:#8B1C62"></div>
<div class="b" style="left:184px;top:369px;width:5px;height:17px;background:#EE6A50"></div>
<div class="b" style="left:191px;top:375px;width:5px;height:11px;background:#FF0000"></div>
<div class="b" style="left:198px;top:371px;width:5px;height:15px;background:#CDB79E"></div>
<div class="b" style="left:205px;top:379px;width:5px;height:7px;background:#EEEE00"></div>
<div class="b" style="left:212px;top:377px;width:5px;height:9px;background:#EEEE00"></div>
<div class="b" style="left:219px;top:376px;width:5px;height:10px;background:#EEEE00"></div>
<div class="b" style="left:226px;top:381px;width:5px;height:5px;background:#EEEE00"></div>
<div class="b" style="left:233px;top:380px;width:5px;height:6px;background:#EEEE00"></div>
<div class="b" style="left:240px;top:375px;width:5px;height:11px;background:#EEEE00"></div>
<div class="b" style="left:247px;top:375px;width:5px;height:11px;background:#EEEE00"></div>
<div class="b" style="left:254px;top:378px;width:5px;height:8px;background:#EEEE00"></div>
<div class="b" style="left:261px;top:373px;width:5px;height:13px;background:#EEEE00"></div>
<div class="b" style="left:268px;top:377px;width:5px;height:9px;background:#EEEE00"></div>
<div class="b" style="left:275px;top:377px;width:5px;height:9px;background:#EEEE00"></div>
<div class="b" style="left:282px;top:377px;width:5px;height:9px;background:#EEEE00"></div>
<div class="b" style="left:289px;top:375px;width:5px;height:11px;background:#EEEE00"></div>
<div class="b" style="left:296px;top:362px;width:5px;height:24px;background:#00CDCD"></div>
<div class="b" style="left:303px;top:385px;width:5px;height:1px;background:#EE82EE"></div>
<div class="b" style="left:317px;top:367px;width:5px;height:19px;background:#EED5D2"></div>
<div class="b" style="left:324px;top:368px;width:5px;height:18px;background:#EED5D2"></div>
<div class="b" style="left:331px;top:371px;width:5px;height:15px;background:#CDB79E"></div>
<div class="b" style="left:338px;top:358px;width:5px;height:28px;background:#EEC591"></div>
<div class="b" style="left:345px;top:368px;width:5px;height:18px;background:#8B7355"></div>
<div class="b" style="left:352px;top:381px;width:5px;height:5px;background:#8B7355"></div>
<div class="b" style="left:359px;top:367px;width:5px;height:19px;background:#CDAA7D"></div>
<div class="b" style="left:366px;top:367px;width:5px;height:19px;background:#EED5D2"></div>
<div class="b" style="left:373px;top:342px;width:5px;height:44px;background:#B452CD"></div>
<div class="b" style="left:380px;top:338px;width:5px;height:48px;background:#7A378B"></div>
<div class="b" style="left:387px;top:342px;width:5px;height:44px;background:#CDB79E"></div>
<div class="b" style="left:394px;top:364px;width:5px;height:22px;background:#CDB79E"></div>
<div class="b" style="left:401px;top:385px;width:5px;height:1px;background:#CDB79E"></div>
<div class="b" style="left:408px;top:339px;width:5px;height:47px;background:#9ACD32"></div>
<div class="b" style="left:415px;top:373px;width:5px;height:13px;background:#CDB79E"></div>
<div class="b" style="left:422px;top:332px;width:5px;height:54px;background:#7A67EE"></div>
<div class="b" style="left:429px;top:351px;width:5px;height:35px;background:#FFD700"></div>
<div class="b" style="left:436px;top:382px;width:5px;height:4px;background:#FFB6C1"></div>
<div class="b" style="left:443px;top:382px;width:5px;height:4px;background:#CD9B1D"></div>
<div class="b" style="left:450px;top:371px;width:5px;height:15px;background:#B4EEB4"></div>
<div class="b" style="left:457px;top:375px;width:5px;height:11px;background:#D9D9D9"></div>
<div class="b" style="left:464px;top:379px;width:5px;height:7px;background:#3A5FCD"></div>
<div class="b" style="left:471px;top:377px;width:5px;height:9px;background:#1E90FF"></div>
<div class="b" style="left:478px;top:356px;width:5px;height:30px;background:#CDB79E"></div>
<div class="b" style="left:485px;top:343px;width:5px;height:43px;background:#CDB79E"></div>
<div class="b" style="left:492px;top:377px;width:5px;height:9px;background:#FFD39B"></div>
<div class="b" style="left:499px;top:371px;width:5px;height:15px;background:#A6A6A6"></div>
<div class="b" style="left:506px;top:356px;width:5px;height:30px;background:#008B45"></div>
<div class="b" style="left:513px;top:373px;width:5px;height:13px;background:#EED5D2"></div>
<div class="b" style="left:520px;top:371px;width:5px;height:15px;background:#EED5D2"></div>
<div class="b" style="left:527px;top:384px;width:5px;height:2px;background:#FF00FF"></div>
<div class="b" style="left:156px;top:387px;width:793px;height:2px;background:#060670"></div>
<div class="t r" style="top:353px;color:#000;width:152.2px">CLIC5</div>
<div class="t c" style="top:391px;color:#000;letter-spacing:0.05px;margin-left:-0.5px">H3K27Ac Mark (Often Found Near Active Regulatory Elements) on 7 cell lines from ENCODE</div>
<div class="t" style="left:13px;top:405px;letter-spacing:-0.07px">Layered H3K27Ac</div>
<div class="ln" style="top:435px"></div>
<div class="t r" style="top:436px;color:#46468c;">4.88 _</div>
<div class="t c" style="top:437px;color:#46468c;letter-spacing:0.035px;margin-left:-0.8px">100 vertebrates Basewise Conservation by PhyloP</div>
<div class="t" style="left:13px;top:461px;color:#46468c">100 Vert. Cons</div>
<div class="t r" style="top:486px;color:#8c4646;">-4.5 _</div>
<div class="b" style="left:408px;top:482px;width:38px;height:1px;background:#ff0000;opacity:.4"></div>
<div class="b" style="left:422px;top:483px;width:6px;height:1px;background:#00ff00"></div>
<svg width="950" height="699" viewBox="0 0 950 699" font-family="Liberation Sans, Arial, sans-serif" font-size="100"><text transform="translate(160.86 477.80) scale(0.6137 0.1174)" font-weight="bold" fill="#ff0000" fill-opacity="1">A</text><text transform="translate(221.65 477.80) scale(0.6183 0.1580)" font-weight="bold" fill="#ff0000" fill-opacity="1">A</text><text transform="translate(405.63 481.75) scale(0.5923 0.0549)" font-weight="bold" fill="#b4aa28" fill-opacity="1">C</text><text transform="translate(443.92 480.60) scale(0.0847 0.0145)" font-weight="bold" fill="#b4aa28" fill-opacity="0.7">T</text><text transform="translate(588.08 476.80) scale(0.6061 0.0580)" font-weight="bold" fill="#ff0000" fill-opacity="1">A</text><text transform="translate(770.80 480.00) scale(0.6015 0.0203)" font-weight="bold" fill="#ff0000" fill-opacity="0.75">A</text><text transform="translate(772.42 480.69) scale(0.6462 0.0141)" font-weight="bold" fill="#0000ff" fill-opacity="1">C</text><text transform="translate(893.35 478.99) scale(0.6615 0.0141)" font-weight="bold" fill="#0000ff" fill-opacity="0.7">C</text></svg>
<div class="t c" style="top:503px;color:#0c0c78;letter-spacing:0.11px;margin-left:-0.3px">Multiz Alignments of 100 Vertebrates</div>
<div class="t r" style="top:517px;color:#e6871e;">Gaps</div>
<div class="t r" style="top:532px;color:#0c0c78;">Human</div>
<div class="t r" style="top:547px;color:#0c0c78;">Rhesus</div>
<div class="t r" style="top:562px;color:#006400;">Mouse</div>
<div class="t r" style="top:577px;color:#0c0c78;">Dog</div>
<div class="t r" style="top:592px;color:#006400;">Elephant</div>
<div class="t r" style="top:607px;color:#006400;">Chicken</div>
<div class="t r" style="top:622px;color:#0c0c78;">X_tropicalis</div>
<div class="t r" style="top:637px;color:#006400;">Zebrafish</div>
<div class="bs" style="left:174.5px;top:532px;color:#0c0c78">A</div>
<div class="bs" style="left:235.5px;top:532px;color:#0c0c78">A</div>
<div class="bs" style="left:296.5px;top:532px;color:#0c0c78">A</div>
<div class="bs" style="left:357.5px;top:532px;color:#0c0c78">A</div>
<div class="bs" style="left:418.5px;top:532px;color:#0c0c78">C</div>
<div class="bs" style="left:479.5px;top:532px;color:#0c0c78">A</div>
<div class="bs" style="left:540.5px;top:532px;color:#0c0c78">A</div>
<div class="bs" style="left:601.5px;top:532px;color:#0c0c78">A</div>
<div class="bs" style="left:662.5px;top:532px;color:#0c0c78">T</div>
<div class="bs" style="left:723.5px;top:532px;color:#0c0c78">A</div>
<div class="bs" style="left:784.5px;top:532px;color:#0c0c78">A</div>
<div class="bs" style="left:845.5px;top:532px;color:#0c0c78">A</div>
<div class="bs" style="left:906.5px;top:532px;color:#0c0c78">G</div>
<div class="bs" style="left:174.5px;top:547px;color:#0c0c78">A</div>
<div class="bs" style="left:235.5px;top:547px;color:#0c0c78">A</div>
<div class="bs" style="left:296.5px;top:547px;color:#0c0c78">A</div>
<div class="bs" style="left:357.5px;top:547px;color:#0c0c78">A</div>
<div class="bs" style="left:418.5px;top:547px;color:#0c0c78">C</div>
<div class="bs" style="left:479.5px;top:547px;color:#0c0c78">A</div>
<div class="bs" style="left:540.5px;top:547px;color:#0c0c78">A</div>
<div class="bs" style="left:601.5px;top:547px;color:#0c0c78">A</div>
<div class="bs" style="left:662.5px;top:547px;color:#0c0c78">T</div>
<div class="bs" style="left:723.5px;top:547px;color:#0c0c78">A</div>
<div class="bs" style="left:784.5px;top:547px;color:#0c0c78">A</div>
<div class="bs" style="left:845.5px;top:547px;color:#0c0c78">A</div>
<div class="bs" style="left:906.5px;top:547px;color:#8686ba">-</div>
<div class="bs" style="left:174.5px;top:563px;color:#8686ba">=</div>
<div class="bs" style="left:235.5px;top:563px;color:#8686ba">=</div>
<div class="bs" style="left:296.5px;top:563px;color:#8686ba">=</div>
<div class="bs" style="left:357.5px;top:563px;color:#8686ba">=</div>
<div class="bs" style="left:418.5px;top:563px;color:#8686ba">=</div>
<div class="bs" style="left:479.5px;top:563px;color:#8686ba">=</div>
<div class="bs" style="left:540.5px;top:563px;color:#8686ba">=</div>
<div class="bs" style="left:601.5px;top:563px;color:#8686ba">=</div>
<div class="bs" style="left:662.5px;top:563px;color:#8686ba">=</div>
<div class="bs" style="left:723.5px;top:563px;color:#8686ba">=</div>
<div class="bs" style="left:784.5px;top:563px;color:#8686ba">=</div>
<div class="bs" style="left:845.5px;top:563px;color:#8686ba">=</div>
<div class="bs" style="left:906.5px;top:563px;color:#8686ba">=</div>
<div class="bs" style="left:174.5px;top:578px;color:#8686ba">=</div>
<div class="bs" style="left:235.5px;top:578px;color:#8686ba">=</div>
<div class="bs" style="left:296.5px;top:578px;color:#8686ba">=</div>
<div class="bs" style="left:357.5px;top:578px;color:#8686ba">=</div>
<div class="bs" style="left:418.5px;top:578px;color:#8686ba">=</div>
<div class="bs" style="left:479.5px;top:578px;color:#8686ba">=</div>
<div class="bs" style="left:540.5px;top:578px;color:#8686ba">=</div>
<div class="bs" style="left:601.5px;top:578px;color:#8686ba">=</div>
<div class="bs" style="left:662.5px;top:578px;color:#8686ba">=</div>
<div class="bs" style="left:723.5px;top:578px;color:#8686ba">=</div>
<div class="bs" style="left:784.5px;top:578px;color:#8686ba">=</div>
<div class="bs" style="left:845.5px;top:578px;color:#8686ba">=</div>
<div class="bs" style="left:906.5px;top:578px;color:#8686ba">=</div>
<div class="bs" style="left:174.5px;top:592px;color:#0c0c78">A</div>
<div class="bs" style="left:235.5px;top:592px;color:#0c0c78">A</div>
<div class="bs" style="left:296.5px;top:592px;color:#0c0c78">A</div>
<div class="bs" style="left:357.5px;top:592px;color:#0c0c78">A</div>
<div class="bs" style="left:418.5px;top:592px;color:#8c8cb4">T</div>
<div class="bs" style="left:479.5px;top:592px;color:#0c0c78">A</div>
<div class="bs" style="left:540.5px;top:592px;color:#8c8cb4">T</div>
<div class="bs" style="left:601.5px;top:592px;color:#0c0c78">A</div>
<div class="bs" style="left:662.5px;top:592px;color:#0c0c78">T</div>
<div class="bs" style="left:723.5px;top:592px;color:#0c0c78">A</div>
<div class="bs" style="left:784.5px;top:592px;color:#0c0c78">A</div>
<div class="bs" style="left:845.5px;top:592px;color:#0c0c78">A</div>
<div class="bs" style="left:906.5px;top:592px;color:#0c0c78">G</div>
<div class="t c" style="top:653px;color:#000;">Repeating Elements by RepeatMasker</div>
<div class="t r" style="top:667px;color:#000;">RepeatMasker</div>
</div></body></html>
